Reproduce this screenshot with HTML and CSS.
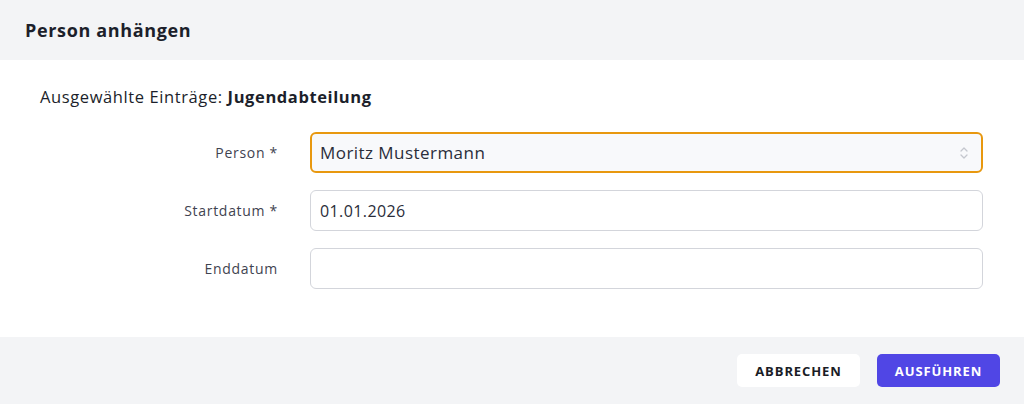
FILE: index.html
```html
<!DOCTYPE html>
<html lang="de">
<head>
<meta charset="utf-8">
<link rel="stylesheet" href="styles.css">
</head>
<body>
<div class="dialog">
  <header class="head"><h1 class="title">Person anhängen</h1></header>
  <main class="body">
    <p class="selected">Ausgewählte Einträge: <strong>Jugendabteilung</strong></p>
    <div class="form">
      <label class="label">Person *</label>
      <div class="select focus">
        <span>Moritz Mustermann</span>
        <svg class="chev" width="10" height="16" viewBox="0 0 10 16"><path d="M2 6 L5 3 L8 6 M2 10 L5 13 L8 10" fill="none" stroke="#c4c7ce" stroke-width="1.3" stroke-linecap="round" stroke-linejoin="round"/></svg>
      </div>
      <label class="label">Startdatum *</label>
      <div class="input">01.01.2026</div>
      <label class="label">Enddatum</label>
      <div class="input"></div>
    </div>
  </main>
  <footer class="foot">
    <button class="btn cancel">ABBRECHEN</button>
    <button class="btn primary">AUSFÜHREN</button>
  </footer>
</div>
</body>
</html>
```
FILE: styles.css
```css
* { box-sizing: border-box; }
html, body { margin: 0; padding: 0; background: #fff; }
body { font-family: "Open Sans", "Noto Sans", sans-serif; color: #1f2230; }
.dialog { width: 1024px; height: 404px; display: flex; flex-direction: column; }
.head { height: 60px; background: #f3f4f6; display: flex; align-items: center; padding: 0 25px; }
.title { margin: 0; font-size: 18px; font-weight: 700; color: #1c1f2b; letter-spacing: 0.65px; }
.body { flex: 1; padding: 25px 41px 0 40px; }
.selected { margin: 0 0 24px; font-size: 16.5px; color: #1c1f2b; letter-spacing: 0.6px; }
.selected strong { font-weight: 700; }
.form { display: grid; grid-template-columns: 238px 1fr; column-gap: 32px; row-gap: 17px; align-items: center; }
.label { text-align: right; font-size: 14px; color: #3f4350; letter-spacing: 0.7px; }
.select, .input { height: 41px; border-radius: 6px; border: 1px solid #d3d5db; display: flex; align-items: center; padding: 0 9px; font-size: 16px; color: #2a2d3a; letter-spacing: 0.4px; }
.select { justify-content: space-between; background: #f8f9fb; font-size: 17px; letter-spacing: 0.45px; }
.select.focus { border: 2px solid #e8980f; padding: 0 12px 0 8px; }
.chev { display: block; }
.foot { height: 67px; background: #f3f4f6; display: flex; align-items: center; justify-content: flex-end; gap: 17px; padding: 0 24px 0 0; }
.btn { height: 33px; width: 123px; border: none; border-radius: 5px; font-family: "Open Sans", "Noto Sans", sans-serif; font-weight: 700; font-size: 13px; letter-spacing: 0.9px; cursor: pointer; }
.cancel { background: #fff; color: #1a1c25; }
.primary { background: #5046e5; color: #fff; }
```
